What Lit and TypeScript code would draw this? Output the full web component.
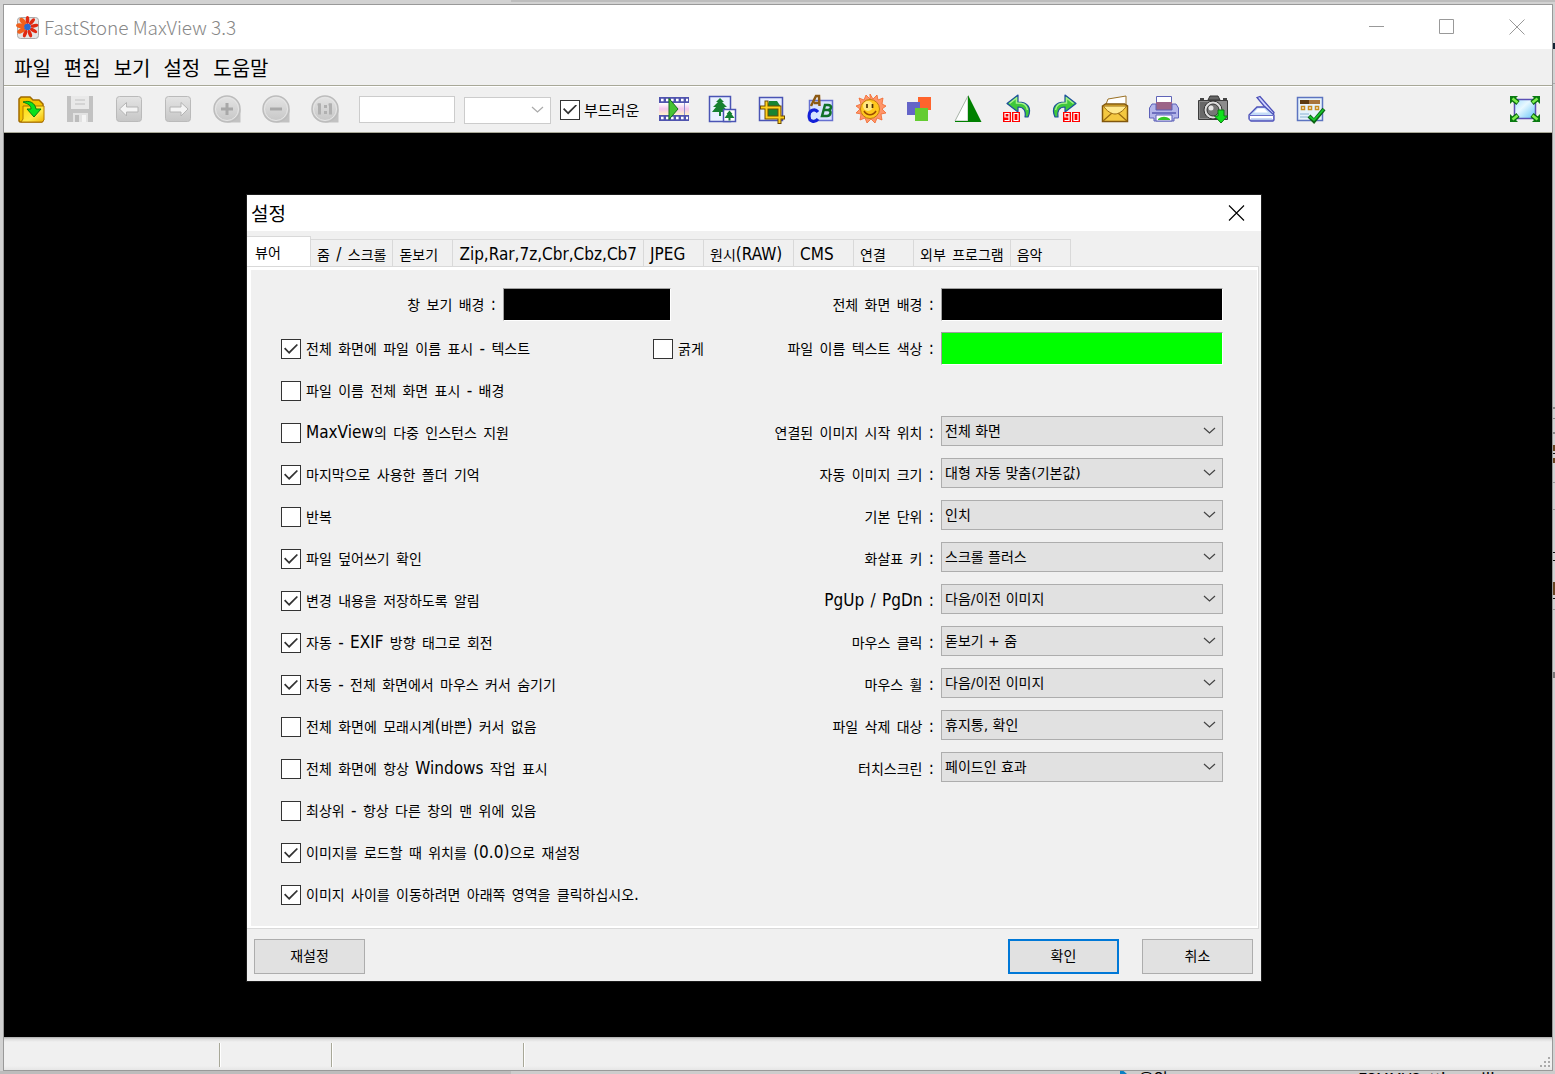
import { LitElement, html, svg, css, nothing, TemplateResult } from "lit";
import { customElement, property } from "lit/decorators.js";

/* Hangul and Latin runs use different faces and sizes, as the dialog font does. */
const mixed = (text: string) =>
  (text.match(/[\uAC00-\uD7A3]+|\s+|[^\s\uAC00-\uD7A3]+/g) ?? []).map((run) =>
    /^\s/.test(run)
      ? run
      : html`<span class=${/[\uAC00-\uD7A3]/.test(run) ? "ko" : "la"}>${run}</span>`
  );

const grayDefs = svg`<defs>
  <linearGradient id="g" x1="0" y1="0" x2="0" y2="1"><stop offset="0" stop-color="#e4e4e4"/><stop offset="1" stop-color="#c6c6c6"/></linearGradient>
</defs>`;

const zoomBase = svg`${grayDefs}
  <path d="M16 29.500H29.500V16z" fill="#c2c2c2"/>
  <circle cx="16" cy="16" r="13" fill="url(#g)" stroke="#bcbcbc" stroke-width="1.500"/>
  <circle cx="16" cy="16" r="11.500" fill="none" stroke="#e6e6e6"/>`;

const digits90 = (x: number) => svg`
  <g transform="translate(${x} 19)">
    <rect width="8" height="10" fill="#f00"/><rect x="9" width="8" height="10" fill="#f00"/>
    <path d="M6 5H2V1.500h4V8.500H1.500M11 1.500h4v7h-4z" fill="none" stroke="#fff" stroke-width="1.200"/>
  </g>`;

const turn = svg`
  <path d="M27 24c4-9 0-15-10-15V2L6 10.500l11 8.500v-5c6 0 8 4 7 10z" fill="#3fc83a" stroke="#1b4f9c" stroke-width="1.200" stroke-linejoin="round"/>
  <path d="M8.500 10.500l7-5.500v5c8 0 10 2 11 7" fill="none" stroke="#a6f08c" stroke-width="1.500"/>`;

const icons: Record<string, TemplateResult> = {
  open: svg`<defs><linearGradient id="f" x1="0" y1="0" x2="1" y2="1"><stop offset="0" stop-color="#ffd800"/><stop offset=".6" stop-color="#ffe94a"/><stop offset="1" stop-color="#f0b400"/></linearGradient></defs>
    <path d="M4 6l2-2h9l3 3h6l4 4v17l-1 1H5l-1-1z" fill="#f4c400" stroke="#a06a00" stroke-width="1.500"/>
    <path d="M8 13h21v14l-2 2H6l2-3z" fill="url(#f)" stroke="#b07800"/>
    <path d="M8 9c7-2 12 1 13 7h5l-7 8-7-8h4c0-4-3-5-8-7z" fill="#0be21c" stroke="#087a12" stroke-linejoin="round"/>`,
  save: svg`${grayDefs}<path d="M3 3h26v26H3z" fill="#c2c2c2"/><path d="M7 3h18v13H7z" fill="#e9e9e9"/>
    <path d="M11 7h10M11 11h10" stroke="#cdcdcd" stroke-width="1.500"/><path d="M9 20h15v9H9z" fill="#e2e2e2"/><path d="M11 22h4v7h-4z" fill="#bcbcbc"/><path d="M18 22h4v7h-4z" fill="#f4f4f4"/>`,
  prev: svg`${grayDefs}<rect x="3.500" y="3.500" width="25" height="25" rx="3" fill="url(#g)" stroke="#bababa"/>
    <path d="M6.500 16l7-6.500V14H25v5H13.500v4z" fill="#f4f4f4" stroke="#b4b4b4"/>`,
  next: svg`${grayDefs}<rect x="3.500" y="3.500" width="25" height="25" rx="3" fill="url(#g)" stroke="#bababa"/>
    <path d="M26 16l-7-6.500V14H8v5h11v4z" fill="#f4f4f4" stroke="#b4b4b4"/>`,
  zoomIn: svg`${zoomBase}<path d="M10 16h12M16 10v12" stroke="#a8a8a8" stroke-width="3"/>`,
  zoomOut: svg`${zoomBase}<path d="M10 16h12" stroke="#a8a8a8" stroke-width="3"/>`,
  actual: svg`${zoomBase}<path d="M10.500 10.500v11M21.500 10.500v11" fill="none" stroke="#b0b0b0" stroke-width="3"/><path d="M8.500 10.500h3v2h-3zM19.500 10.500h3v2h-3zM15 12h3v3h-3zM15 18h3v3h-3z" fill="#b0b0b0"/>`,
  film: svg`<defs><linearGradient id="m" x1="0" y1="0" x2="0" y2="1"><stop offset="0" stop-color="#fff"/><stop offset=".5" stop-color="#f3c6ec"/><stop offset="1" stop-color="#fff4c8"/></linearGradient></defs>
    <path d="M1 4h30v24H1z" fill="#5054ae"/><path d="M1 10h30v12H1z" fill="url(#m)"/>
    <path d="M3 7h27M3 25h27" stroke="#fff" stroke-width="2.600" stroke-dasharray="2.600 2.400"/>
    <path d="M26.500 10v12" stroke="#8d8fd0"/><path d="M11 5.500l9 10.500-9 10.500z" fill="#47c234" stroke="#16701a"/>`,
  resize: svg`<path d="M2.500 3.500h21v25h-21z" fill="#e9f1ff" stroke="#4a54b4" stroke-width="1.500"/>
    <path d="M13 5l4 4h-2l5 5h-3l4 5h-7v4h-2v-4H5l4-5H6l5-5H9z" fill="#158030"/>
    <path d="M16.500 16.500h12v12h-12z" fill="#fff" stroke="#4a54b4" stroke-width="1.500"/><path d="M22.500 17.500l3 3.500h-1l3 4h-4v2.500h-2V25h-4l3-4h-1z" fill="#158030"/>`,
  crop: svg`<path d="M3.500 4.500h23v23h-23z" fill="#e7eeff" stroke="#4a54b4" stroke-width="1.500"/><path d="M13 8h8l4 6v9H11v-9z" fill="#188432"/>
    <path d="M4 14.500h19.500V31M10.500 7.500v17H29" fill="none" stroke="#6f4a00" stroke-width="4"/><path d="M5 14.500h18.500V30M10.500 8.500v16H28" fill="none" stroke="#ffd21c" stroke-width="2"/>`,
  text: svg`<path d="M4.500 7.500h23v20h-23z" fill="#d8e2ff" stroke="#6670d0" stroke-width="1.500"/>
    <path d="M6 13L11 3h3l.5 10M9 10h6" fill="none" stroke="#8d5a14" stroke-width="2.500"/>
    <path d="M13 19C10 15 4 17 4 23s6 7 9 3" fill="none" stroke="#1420d8" stroke-width="3"/>
    <path d="M17 23l3-11h3c5 0 3 5 0 5h-4 4c4 0 3 6-1 6z" fill="none" stroke="#0f7028" stroke-width="2.500"/>`,
  sun: svg`<path d="M16 1l3 5 4-4 1 5 5-2-1 6 4 2-4 3 4 4-5 1 1 6-5-2-2 5-4-4-4 4-2-5-5 2 1-6-5-1 4-4-4-3 5-2-2-6 5 2 2-5 4 4z" fill="#ff9468" stroke="#f0672c" stroke-width=".8"/>
    <circle cx="16" cy="16" r="9.500" fill="#ffc81e" stroke="#c27c10"/><circle cx="14" cy="13" r="5" fill="#fff2a0" opacity=".75"/>
    <path d="M13 11v4M18.500 11v4" stroke="#503000" stroke-width="1.700"/><path d="M10 18c3 5 9 5 12 0" fill="none" stroke="#9a4a00" stroke-width="1.500"/>`,
  colors: svg`<path d="M15 4h13v13H15z" fill="#ff642c"/><path d="M4 9h13v13H4z" fill="#6464c8"/><path d="M12 15h13v13H12z" fill="#64cc32"/>`,
  levels: svg`<path d="M16 3v25H3z" fill="#fff" stroke="#a8b4a8"/><path d="M16 2l13.500 27H16z" fill="#008000"/><path d="M3 28.500h26" stroke="#008000"/>`,
  left: svg`${turn}${digits90(2)}`,
  right: svg`<g transform="matrix(-1 0 0 1 32 0)">${turn}</g>${digits90(13)}`,
  mail: svg`<path d="M6 14l3-8 18-3v13z" fill="#fff" stroke="#9a7024"/>
    <path d="M3.500 13l3-2h19l3 2v15.500h-25z" fill="#f4c840" stroke="#80560c" stroke-width="1.500"/><path d="M4 28l9-8M28 28l-9-8" fill="none" stroke="#9a6a10" stroke-width="1.200"/>
    <path d="M4.500 13h23c-3 5-8 8-11.500 8S7.500 18 4.500 13z" fill="#ffe98e" stroke="#9a6a10"/>`,
  print: svg`<path d="M8.500 3.500h15v10h-15z" fill="#fff" stroke="#6064b8"/><path d="M8 9h16v8H8z" fill="#9c6488"/>
    <path d="M4 11h4v6h16v-6h4l2.500 4v10H26v3H6v-3H1.500V15z" fill="#b4b6ea" stroke="#5c60b8"/><path d="M4 20h24" stroke="#6d70c0" stroke-width="2"/>
    <path d="M8 22h16v6H8z" fill="#fff" stroke="#5c60b8"/><path d="M10 26c4-3 8-3 12 0v1H10z" fill="#34c624"/>`,
  camera: svg`<path d="M11 7l2-4h8l2 4z" fill="#666" stroke="#333"/><path d="M1.500 7.500h29v19h-29z" fill="#8c8c8c" stroke="#3c3c3c"/><path d="M3 9h7v16H3z" fill="#686868"/>
    <path d="M3 6h4M26 6h4" stroke="#444" stroke-width="2"/><circle cx="16" cy="17" r="9" fill="#ddd" stroke="#333"/><circle cx="16" cy="17" r="6" fill="#777" stroke="#333"/><circle cx="14" cy="15" r="2.500" fill="#e6e6e6"/>
    <path d="M21 17h6v6h3.500L24 30l-6.500-7H21z" fill="#12e21c" stroke="#0a7c12"/>`,
  scan: svg`<path d="M11 4.500l3-1 14 16-1 3-2-1z" fill="#cfd4ff" stroke="#4c50b8" stroke-width="1.300"/>
    <path d="M3 22l8-8h8l9 8v5l-1 1H5l-2-2z" fill="#c4dcf8" stroke="#4c50b8" stroke-width="1.300"/><path d="M12 15.500h6l4 4H8z" fill="#fff"/>
    <path d="M3.500 22.500h24v4.500h-24z" fill="#fff" stroke="#6a6ec8"/><path d="M5 26h21" stroke="#b8ccf0" stroke-width="1.500"/>`,
  settings: svg`<path d="M2.500 4.500h25v23h-25z" fill="#e6f2fa" stroke="#5c74c0" stroke-width="1.500"/><path d="M5 7h20v4H5z" fill="#a8743c"/><path d="M5 7h9v4H5z" fill="#5c3a10"/>
    <path d="M6.500 13.500h3v3h-3zM13.500 13.500h3v3h-3zM20.500 13.500h3v3h-3z" fill="#fff" stroke="#c88c20" stroke-width="1.500"/><path d="M5 21h9M5 24h9" stroke="#a8c8e0" stroke-width="1.500"/>
    <path d="M14 23l5 5 10-12" fill="none" stroke="#0c6414" stroke-width="4"/><path d="M14.500 23.500L19 27l9.500-10.500" fill="none" stroke="#18c82c" stroke-width="1.800"/>`,
  full: svg`<defs><linearGradient id="b" x1="0" y1="0" x2="1" y2="1"><stop offset="0" stop-color="#a8e0ff"/><stop offset=".4" stop-color="#e8f8ff"/><stop offset="1" stop-color="#60c4f8"/></linearGradient></defs>
    <path d="M5.500 6.500h21v19h-21z" fill="url(#b)" stroke="#5a50b4" stroke-width="1.500"/>
    <path d="M3 5l6 5M29 5l-6 5M3 27l6-5M29 27l-6-5" stroke="#0a6a10" stroke-width="5"/>
    <path d="M1 3h8L1 11zM31 3h-8l8 8zM1 29h8l-8-8zM31 29h-8l8-8z" fill="#0a7a12"/>
    <path d="M3.500 5.500l5 4M28.500 5.500l-5 4M3.500 26.500l5-4M28.500 26.500l-5-4" stroke="#7cf04c" stroke-width="2.500"/>`,
};

const leftTools: [string, string][] = [
  ["open", "열기"], ["save", "저장"], ["prev", "이전"], ["next", "다음"],
  ["zoomIn", "확대"], ["zoomOut", "축소"], ["actual", "실제 크기"],
];
const rightTools: [string, string][] = [
  ["film", "슬라이드 쇼"], ["resize", "크기 조정"], ["crop", "자르기"], ["text", "텍스트"], ["sun", "조명"],
  ["colors", "색상"], ["levels", "선명하게"], ["left", "왼쪽으로 회전"], ["right", "오른쪽으로 회전"],
  ["mail", "이메일"], ["print", "인쇄"], ["camera", "캡처"], ["scan", "스캔"], ["settings", "설정"],
];

const checks: [string, boolean][] = [
  ["전체 화면에 파일 이름 표시 - 텍스트", true],
  ["파일 이름 전체 화면 표시 - 배경", false],
  ["MaxView의 다중 인스턴스 지원", false],
  ["마지막으로 사용한 폴더 기억", true],
  ["반복", false],
  ["파일 덮어쓰기 확인", true],
  ["변경 내용을 저장하도록 알림", true],
  ["자동 - EXIF 방향 태그로 회전", true],
  ["자동 - 전체 화면에서 마우스 커서 숨기기", true],
  ["전체 화면에 모래시계(바쁜) 커서 없음", false],
  ["전체 화면에 항상 Windows 작업 표시", false],
  ["최상위 - 항상 다른 창의 맨 위에 있음", false],
  ["이미지를 로드할 때 위치를 (0.0)으로 재설정", true],
  ["이미지 사이를 이동하려면 아래쪽 영역을 클릭하십시오.", true],
];

const choices: [string, string][] = [
  ["연결된 이미지 시작 위치 :", "전체 화면"],
  ["자동 이미지 크기 :", "대형 자동 맞춤(기본값)"],
  ["기본 단위 :", "인치"],
  ["화살표 키 :", "스크롤 플러스"],
  ["PgUp / PgDn :", "다음/이전 이미지"],
  ["마우스 클릭 :", "돋보기 + 줌"],
  ["마우스 휠 :", "다음/이전 이미지"],
  ["파일 삭제 대상 :", "휴지통, 확인"],
  ["터치스크린 :", "페이드인 효과"],
];

const tabs: [string, string?][] = [
  ["뷰어"], ["줌 / 스크롤"], ["돋보기"], ["Zip,Rar,7z,Cbr,Cbz,Cb7"], ["JPEG"],
  ["원시(RAW)", "wide"], ["CMS"], ["연결"], ["외부 프로그램"], ["음악"],
];

const shared = css`
  *, *::before, *::after { box-sizing: border-box; }
  button, input, select { font: inherit; color: inherit; margin: 0; border-radius: 0; }
  button { padding: 0; border: 0; background: none; }
  svg { display: block; }
  .mixed { font-family: "DejaVu Sans", sans-serif; font-size: 20px; line-height: 30px; white-space: pre; }
  .ko { font-family: "Noto Sans CJK KR", sans-serif; font-size: 14px; }
  .la { font-family: "DejaVu Sans Condensed", "Noto Sans", sans-serif; font-size: 17px; }
  .check { display: flex; align-items: center; gap: 5px; }
  .check.mixed > span { padding-bottom: 3px; }
  .check input { appearance: none; flex: none; width: 20px; height: 20px; border: 1px solid #333; background: #fff; display: grid; place-items: center; }
  .check input:checked::before {
    content: ""; width: 14px; height: 10px; background: #333;
    clip-path: polygon(0 48%, 9% 36%, 36% 74%, 91% 0, 100% 10%, 37% 100%);
  }
  .combo { position: relative; display: block; }
  .combo select { appearance: none; width: 100%; height: 100%; padding: 0 24px 0 3px; border: 1px solid #adadad; background: #e1e1e1;
    font-family: "DejaVu Sans", "Noto Sans CJK KR", sans-serif; font-size: 14px; }
  .combo svg { position: absolute; right: 7px; top: 50%; margin-top: -4px; pointer-events: none; }
`;

const chevron = (color: string) => html`<svg width="13" height="8" viewBox="0 0 13 8" aria-hidden="true">
  <path d="M1 1l5.500 5L12 1" fill="none" stroke=${color} stroke-width="1.200"/></svg>`;

@customElement("settings-dialog")
export class SettingsDialog extends LitElement {
  @property({ type: Number }) active = 0;

  static styles = [shared, css`
    :host { display: block; background: #f0f0f0; color: #000; outline: 1px solid #1c1c1c; }
    .title { display: flex; align-items: center; justify-content: space-between; height: 36px; padding: 0 16px 0 4px; background: #fff; }
    .title h2 { margin: 0; font: 400 19px/36px "Noto Sans CJK KR", sans-serif; }
    .tabs { display: flex; align-items: flex-end; height: 35px; }
    .tab { height: 27px; min-width: 60px; padding: 0 6px; border: 1px solid #d9d9d9; border-width: 1px 1px 0 0; text-align: left; }
    .tab.mixed { line-height: 24px; }
    .tab.wide { min-width: 90px; }
    .tab.on { height: 30px; min-width: 64px; padding: 0 8px; background: #fff; }
    .page { display: flex; border: 1px solid #d9d9d9; border-left: 0; margin-right: 2px; box-shadow: inset 4px 3px #fff, inset -1px -2px #fff; padding: 3px 1px 12px 4px; }
    .left { flex: 1; }
    .right { flex: 0 0 520px; padding-right: 34px; }
    .row { display: flex; height: 42px; align-items: center; padding-left: 30px; }
    .row > :first-child { flex: 1; }
    .bold { flex: 0 0 84px; }
    .field { display: flex; height: 42px; padding-top: 4px; gap: 7px; }
    .field label { flex: 1; text-align: right; }
    .field.first { height: 58px; padding-top: 18px; }
    .left .field label { flex: 0 0 245px; }
    .swatch { width: 282px; height: 33px; border: 1px solid #a0a0a0; border-right-color: #fff; border-bottom-color: #fff; background: #000; }
    .swatch.narrow { width: 168px; }
    .swatch.green { background: #0f0; }
    .spacer { height: 42px; }
    .combo { width: 282px; height: 30px; }
    .foot { display: flex; gap: 23px; padding: 10px 8px 7px 7px; }
    .foot button { width: 111px; height: 35px; padding-bottom: 3px; border: 1px solid #adadad; background: #e1e1e1; font: 14px "Noto Sans CJK KR", sans-serif; }
    .foot .ok { margin-left: auto; border: 2px solid #0078d7; }
  `];

  render() {
    return html`
      <div class="title"><h2>설정</h2>
        <button aria-label="닫기"><svg width="17" height="17" viewBox="0 0 17 17"><path d="M1 .5l15 15M16 .5l-15 15" stroke="#000" stroke-width="1.100"/></svg></button>
      </div>
      <div class="tabs" role="tablist">
        ${tabs.map(([t, size = ""], i) => html`<button role="tab" aria-selected=${i === this.active} class="tab mixed ${size} ${i === this.active ? "on" : ""}"
          @click=${() => (this.active = i)}>${mixed(t)}</button>`)}
      </div>
      <div class="page">
        <div class="left">
          <div class="field first"><label class="mixed" for="bg">${mixed("창 보기 배경 :")}</label><button id="bg" class="swatch narrow"></button></div>
          ${checks.map(([t, on], i) => html`<div class="row">
            <label class="check mixed"><input type="checkbox" .checked=${on}><span>${mixed(t)}</span></label>
            ${i === 0 ? html`<label class="check mixed bold"><input type="checkbox"><span>${mixed("굵게")}</span></label>` : nothing}
          </div>`)}
        </div>
        <div class="right">
          <div class="field first"><label class="mixed" for="fs">${mixed("전체 화면 배경 :")}</label><button id="fs" class="swatch"></button></div>
          <div class="field"><label class="mixed" for="tc">${mixed("파일 이름 텍스트 색상 :")}</label><button id="tc" class="swatch green"></button></div>
          <div class="spacer"></div>
          ${choices.map(([t, v], i) => html`<div class="field">
            <label class="mixed" for="c${i}">${mixed(t)}</label>
            <span class="combo"><select id="c${i}"><option>${v}</option></select>${chevron("#444")}</span>
          </div>`)}
        </div>
      </div>
      <div class="foot"><button>재설정</button><button class="ok">확인</button><button>취소</button></div>`;
  }
}

@customElement("app-root")
export class AppRoot extends LitElement {
  static styles = [shared, css`
    :host { position: relative; display: flex; min-height: 100vh; padding: 4px 2px 3px 3px; overflow: hidden; background: #d2d2d2; color: #000;
      font-family: "Noto Sans CJK KR", sans-serif; }
    *, :host { box-sizing: border-box; }
    .behind { position: absolute; inset: 0; overflow: hidden; }
    .edge { position: absolute; left: 511px; right: 0; top: 0; height: 2px; background: #bdbdbd; }
    .under { position: absolute; left: 0; right: 0; bottom: 0; height: 3px; overflow: hidden; background: linear-gradient(90deg, #bcbcbc 511px, #ccc 511px); font-size: 16px; line-height: 17px; }
    .under span { position: absolute; top: -1px; }
    .under .one { left: 1139px; }
    .under .two { left: 1358px; }
    .under i { position: absolute; left: 1120px; top: 0; width: 7px; height: 3px; background: #0a80c4; clip-path: polygon(0 0, 50% 0, 100% 100%, 0 100%); }
    .side { position: absolute; right: 0; top: 0; width: 3px; height: 700px;
      background: linear-gradient(#0000 43px, #123 43px 49px, #0000 49px 83px, #aaa 83px 84px, #0000 84px 407px, #888 407px 409px, #0000 409px 418px,
        #888 418px 419px, #0000 419px 432px, #888 432px 434px, #0000 434px 445px, #642 445px 451px, #0000 451px 453px, #111 453px 454px, #0000 454px 458px,
        #642 458px 463px, #0000 463px 482px, #999 482px 483px, #0000 483px 509px, #999 509px 510px, #0000 510px 552px, #111 552px 553px, #0000 553px 560px,
        #111 560px 561px, #0000 561px 582px, #642 582px 595px, #0000 595px 598px, #111 598px 599px, #0000 599px 609px, #999 609px 610px, #0000 610px 672px, #777 672px 678px, #0000 678px); }
    .window { position: relative; flex: 1; display: flex; flex-direction: column; min-width: 0; border: 1px solid #999; background: #f0f0f0; }
    .titlebar { display: flex; align-items: center; height: 44px; padding-left: 11px; background: #fff; }
    .titlebar h1 { flex: 1; margin: 0 0 0 4px; font: 300 19px/44px "Noto Sans CJK KR", sans-serif; color: #888; }
    .titlebar button { width: 70px; height: 44px; display: grid; place-items: center; }
    .menu { display: flex; gap: 13px; height: 37px; padding: 0 10px; border-bottom: 1px solid #a8a898; }
    .menu button { font-size: 20px; line-height: 35px; }
    .tools { display: flex; align-items: center; height: 47px; padding: 0 3px 0 2px; border-top: 1px solid #fff; border-bottom: 1px solid #a8a898; }
    .tool { flex: none; width: 49px; height: 44px; padding-bottom: 1px; display: grid; place-items: center; }
    .zoom { width: 96px; height: 27px; margin: 0 9px 0 10px; border: 1px solid #ccc; background: #fff; }
    .tools .combo { width: 87px; height: 27px; margin-right: 9px; }
    .tools .combo select { background: #fff; border-color: #ccc; }
    .smooth { width: 80px; margin-right: 9px; gap: 4px; font-size: 15px; white-space: nowrap; }
    .last { margin-left: auto; }
    .canvas { position: relative; flex: 1; min-height: 850px; background: #000; }
    settings-dialog { position: absolute; top: 62px; left: 243px; right: 291px; }
    .status { display: flex; height: 33px; padding: 6px 2px 3px 0; background: linear-gradient(#aaa 0, #dcdcdc 2px, #f0f0f0 5px, #f0f0f0 29px, #e6e6e6 33px); }
    .cell { border-right: 1px solid #a8a898; box-shadow: 1px 0 #fff; }
    .c1 { width: 216px; } .c2 { width: 112px; } .c3 { width: 192px; }
    .grip { margin: auto 0 0 auto; }
  `];

  render() {
    const tool = ([id, name]: [string, string], extra = "") => html`<button class="tool ${extra}" aria-label=${name}>
      <svg width="32" height="32" viewBox="0 0 32 32" aria-hidden="true">${icons[id]}</svg></button>`;
    return html`
      <div class="behind" aria-hidden="true">
        <div class="edge"></div><div class="side"></div>
        <div class="under"><i></i><span class="one">음악</span><span class="two">FSMMVSettings.dll</span></div>
      </div>
      <div class="window">
        <header class="titlebar">
          <svg width="25" height="25" viewBox="0 0 25 25" aria-hidden="true">
            <rect x="2.500" y="2.500" width="21" height="21" rx="3" fill="#e4e4e4" stroke="#aaa"/>
            ${[0, 40, 80, 120, 160, 200, 240, 280, 320].map((a, i) => svg`<ellipse cx="12.500" cy="5" rx=${i > 5 ? 2.4 : 1.8} ry=${i > 5 ? 4.6 : 4} fill=${i > 5 ? "#f0601c" : "#e02810"} transform="rotate(${a} 12.500 12)"/>`)}
            <circle cx="12.500" cy="12" r="3.300" fill="#2a6ad0"/>
          </svg>
          <h1>FastStone MaxView 3.3</h1>
          <button aria-label="최소화"><svg width="16" height="16" viewBox="0 0 16 16"><path d="M0 7.500h15" stroke="#999"/></svg></button>
          <button aria-label="최대화"><svg width="16" height="16" viewBox="0 0 16 16"><path d="M.5 .5h14v14H.5z" fill="none" stroke="#999"/></svg></button>
          <button aria-label="닫기"><svg width="16" height="16" viewBox="0 0 16 16"><path d="M.5 .5l15 15M15.500 .5l-15 15" stroke="#999"/></svg></button>
        </header>
        <nav class="menu">${["파일", "편집", "보기", "설정", "도움말"].map((m) => html`<button>${m}</button>`)}</nav>
        <div class="tools">
          ${leftTools.map((t) => tool(t))}
          <input class="zoom" type="text" aria-label="배율">
          <span class="combo"><select aria-label="확대 목록"><option></option></select>${chevron("#aaa")}</span>
          <label class="check smooth"><input type="checkbox" .checked=${true}><span>부드러운</span></label>
          ${rightTools.map((t) => tool(t))}
          ${tool(["full", "전체 화면"], "last")}
        </div>
        <main class="canvas"><settings-dialog></settings-dialog></main>
        <footer class="status">
          <div class="cell c1"></div><div class="cell c2"></div><div class="cell c3"></div>
          <svg class="grip" width="10" height="10" viewBox="0 0 10 10" fill="#aaa"><path d="M8 0h2v2H8zM4 4h2v2H4zM8 4h2v2H8zM0 8h2v2H0zM4 8h2v2H4zM8 8h2v2H8z"/></svg>
        </footer>
      </div>`;
  }
}
